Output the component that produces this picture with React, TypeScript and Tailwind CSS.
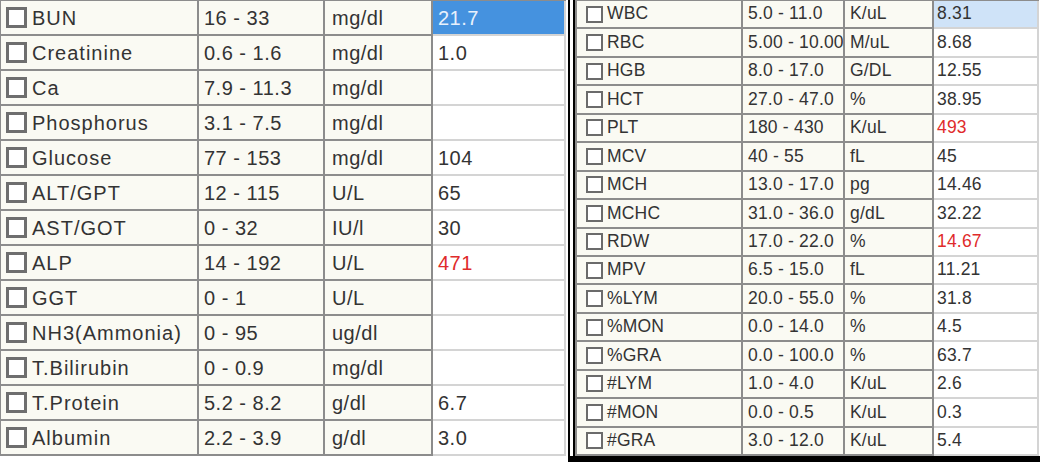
import React from "react";

type Row = { name: string; range: string; unit: string; value: string; red?: boolean; sel?: boolean };

const left: Row[] = [
  { name: "BUN", range: "16 - 33", unit: "mg/dl", value: "21.7", sel: true },
  { name: "Creatinine", range: "0.6 - 1.6", unit: "mg/dl", value: "1.0" },
  { name: "Ca", range: "7.9 - 11.3", unit: "mg/dl", value: "" },
  { name: "Phosphorus", range: "3.1 - 7.5", unit: "mg/dl", value: "" },
  { name: "Glucose", range: "77 - 153", unit: "mg/dl", value: "104" },
  { name: "ALT/GPT", range: "12 - 115", unit: "U/L", value: "65" },
  { name: "AST/GOT", range: "0 - 32", unit: "IU/l", value: "30" },
  { name: "ALP", range: "14 - 192", unit: "U/L", value: "471", red: true },
  { name: "GGT", range: "0 - 1", unit: "U/L", value: "" },
  { name: "NH3(Ammonia)", range: "0 - 95", unit: "ug/dl", value: "" },
  { name: "T.Bilirubin", range: "0 - 0.9", unit: "mg/dl", value: "" },
  { name: "T.Protein", range: "5.2 - 8.2", unit: "g/dl", value: "6.7" },
  { name: "Albumin", range: "2.2 - 3.9", unit: "g/dl", value: "3.0" },
];

const right: Row[] = [
  { name: "WBC", range: "5.0 - 11.0", unit: "K/uL", value: "8.31", sel: true },
  { name: "RBC", range: "5.00 - 10.00", unit: "M/uL", value: "8.68" },
  { name: "HGB", range: "8.0 - 17.0", unit: "G/DL", value: "12.55" },
  { name: "HCT", range: "27.0 - 47.0", unit: "%", value: "38.95" },
  { name: "PLT", range: "180 - 430", unit: "K/uL", value: "493", red: true },
  { name: "MCV", range: "40 - 55", unit: "fL", value: "45" },
  { name: "MCH", range: "13.0 - 17.0", unit: "pg", value: "14.46" },
  { name: "MCHC", range: "31.0 - 36.0", unit: "g/dL", value: "32.22" },
  { name: "RDW", range: "17.0 - 22.0", unit: "%", value: "14.67", red: true },
  { name: "MPV", range: "6.5 - 15.0", unit: "fL", value: "11.21" },
  { name: "%LYM", range: "20.0 - 55.0", unit: "%", value: "31.8" },
  { name: "%MON", range: "0.0 - 14.0", unit: "%", value: "4.5" },
  { name: "%GRA", range: "0.0 - 100.0", unit: "%", value: "63.7" },
  { name: "#LYM", range: "1.0 - 4.0", unit: "K/uL", value: "2.6" },
  { name: "#MON", range: "0.0 - 0.5", unit: "K/uL", value: "0.3" },
  { name: "#GRA", range: "3.0 - 12.0", unit: "K/uL", value: "5.4" },
];

function LeftTable() {
  return (
    <div className="w-[566px] border-t border-l border-[#8c8c8c] flex flex-col">
      {left.map((r) => (
        <div key={r.name} className="flex h-[35px] whitespace-nowrap">
          <div className="w-[198px] flex items-center gap-[5px] pl-[5px] bg-[#fafaf3] border-r-2 border-b-2 border-[#8c8c8c]">
            <span className="w-[21px] h-[21px] border-[3px] border-[#6e6e6e] bg-white shrink-0" />
            <span className="tracking-[1px]">{r.name}</span>
          </div>
          <div className="w-[126px] flex items-center pl-[5px] bg-[#fafaf3] border-r-2 border-b-2 border-[#8c8c8c]">
            {r.range}
          </div>
          <div className="w-[108px] flex items-center pl-[7px] bg-[#fafaf3] border-r-2 border-b-2 border-[#8c8c8c]">
            {r.unit}
          </div>
          <div
            className={
              r.sel
                ? "w-[133px] flex items-center pl-[5px] bg-[#4592df] text-[#e8f1fc] border-r-2 border-b-2 border-[#d4d4d4]"
                : r.red
                ? "w-[133px] flex items-center pl-[5px] bg-white text-[#e02b2b] border-r-2 border-b-2 border-[#d4d4d4]"
                : "w-[133px] flex items-center pl-[5px] bg-white border-r-2 border-b-2 border-[#d4d4d4]"
            }
          >
            {r.value}
          </div>
        </div>
      ))}
    </div>
  );
}

function RightTable() {
  return (
    <div className="w-[464px] h-[456px] border-l-2 border-t border-[#8c8c8c] grid grid-rows-[repeat(16,minmax(0,1fr))]">
      {right.map((r) => (
        <div key={r.name} className="flex min-h-0 whitespace-nowrap">
          <div className="w-[166px] flex items-center gap-[4px] pl-[9px] bg-[#fafaf3] border-r-2 border-b-2 border-[#8c8c8c]">
            <span className="w-[17px] h-[17px] border-[2.5px] border-[#6b6b6b] bg-white shrink-0" />
            <span>{r.name}</span>
          </div>
          <div className="w-[102px] flex items-center pl-[5px] bg-[#fafaf3] border-r-2 border-b-2 border-[#8c8c8c] overflow-hidden">
            {r.range}
          </div>
          <div className="w-[89px] flex items-center pl-[5px] bg-[#fafaf3] border-r-2 border-b-2 border-[#8c8c8c]">
            {r.unit}
          </div>
          <div
            className={
              r.sel
                ? "w-[105px] flex items-center pl-[3px] bg-[#cfe3f8] border-r-2 border-b-2 border-[#d4d4d4]"
                : r.red
                ? "w-[105px] flex items-center pl-[3px] bg-white text-[#e02b2b] border-r-2 border-b-2 border-[#d4d4d4]"
                : "w-[105px] flex items-center pl-[3px] bg-white border-r-2 border-b-2 border-[#d4d4d4]"
            }
          >
            {r.value}
          </div>
        </div>
      ))}
    </div>
  );
}

export default function App() {
  return (
    <div
      className="w-[1044px] h-[462px] bg-white flex text-[#333333] overflow-hidden"
      style={{ fontFamily: '"Liberation Sans", Arial, sans-serif' }}
    >
      <div className="w-[568px] shrink-0 text-[20px] tracking-[0.5px] leading-none">
        <LeftTable />
      </div>
      <div className="w-[472px] h-[462px] shrink-0 flex border-l-2 border-b-[6px] border-black">
        <div className="w-[3px] bg-white shrink-0" />
        <div className="flex-1 flex border-l-2 border-black text-[17.5px] tracking-[0.2px] leading-none">
          <RightTable />
        </div>
      </div>
    </div>
  );
}
